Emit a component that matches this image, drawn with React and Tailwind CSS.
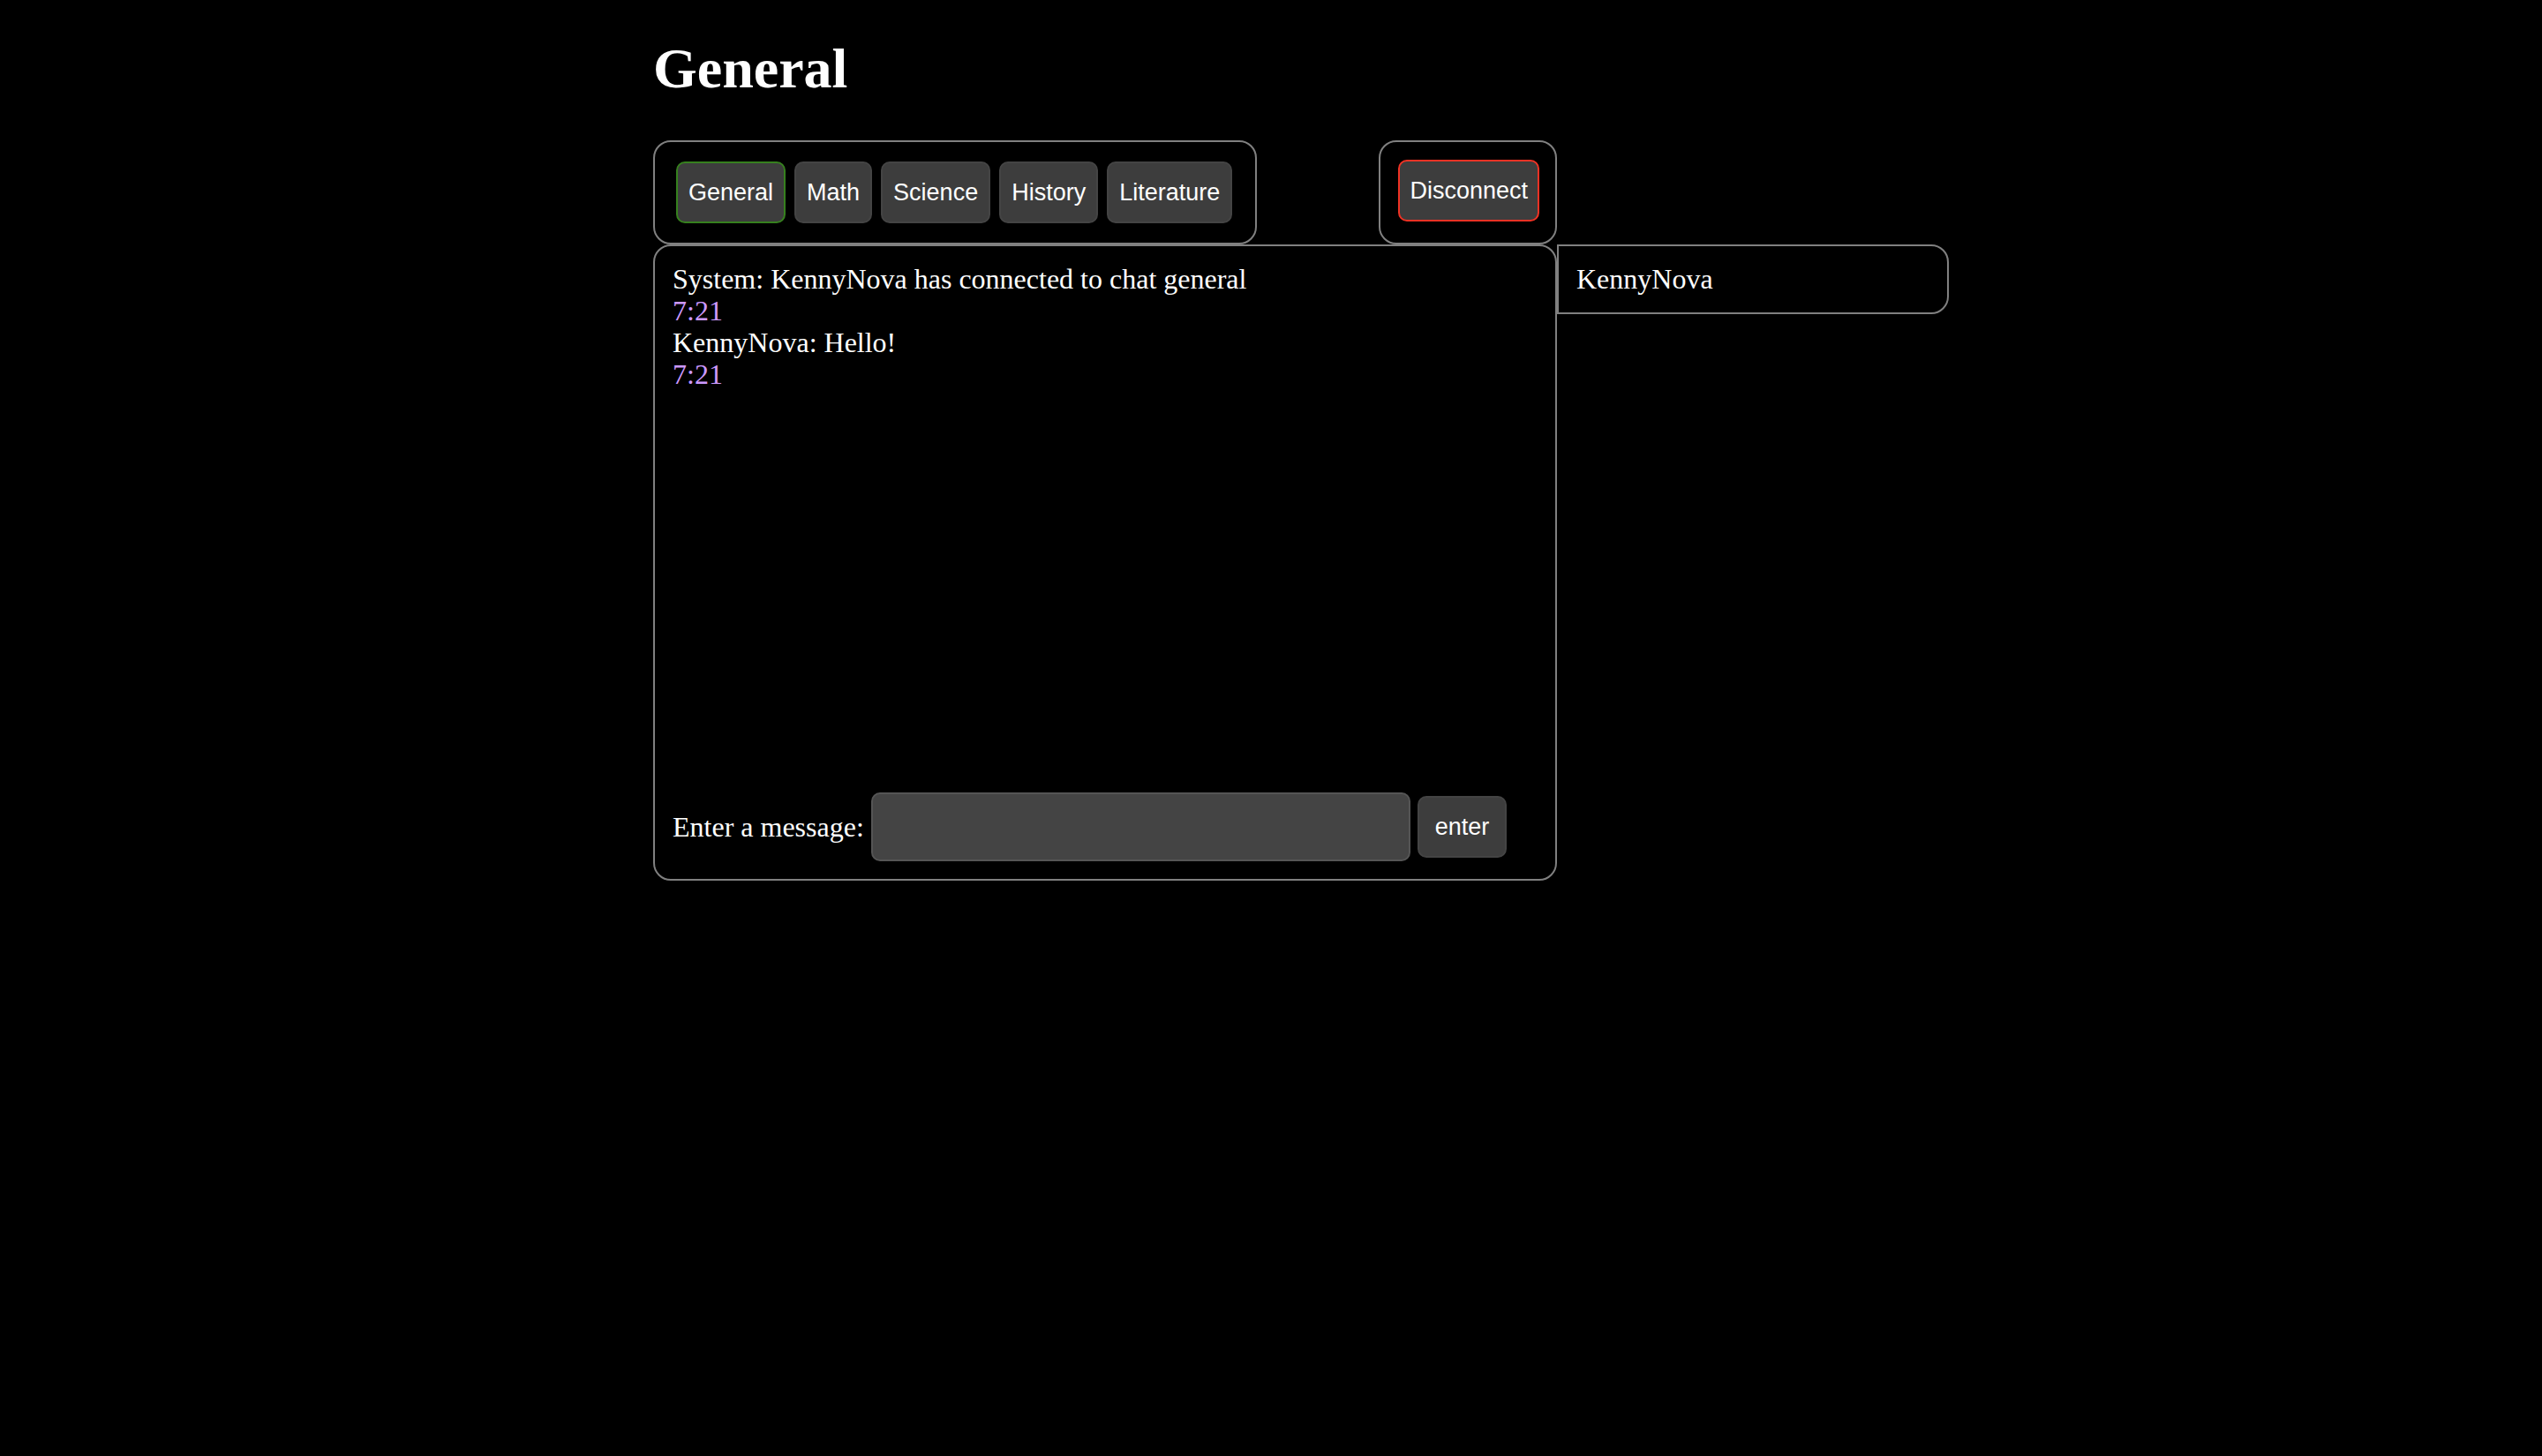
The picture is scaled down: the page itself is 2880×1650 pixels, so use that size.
import { useState } from "react";

const rooms = ["General", "Math", "Science", "History", "Literature"];

const messages = [
  { id: 1, author: "System", text: "KennyNova has connected to chat general", time: "7:21" },
  { id: 2, author: "KennyNova", text: "Hello!", time: "7:21" },
];

const users = ["KennyNova"];

const buttonBase =
  "h-[70px] rounded-[10px] border-2 bg-[#3d3d3d] text-center font-['Liberation_Sans',Arial,sans-serif] text-[27px] leading-8 text-white";

export default function App() {
  const [room, setRoom] = useState("General");
  const [draft, setDraft] = useState("");

  return (
    <div className="flex min-h-screen justify-center bg-black pl-[68px] font-['Liberation_Serif','Times_New_Roman',serif] text-[32px] leading-9 text-white">
      <div className="w-full max-w-[1468px]">
        <h1 className="pt-[42px] pb-[45px] text-[64px] leading-[72px] font-bold">{room}</h1>
        <div className="grid grid-cols-[minmax(0,1024px)_444px] items-start">
          <header className="flex items-stretch justify-between">
            <nav
              aria-label="Rooms"
              className="flex gap-2.5 rounded-[20px] border-2 border-[#808080] py-[22px] pr-[26px] pl-6"
            >
              {rooms.map((name) => (
                <button
                  key={name}
                  type="button"
                  onClick={() => setRoom(name)}
                  className={`${buttonBase} px-3 ${name === room ? "border-[#36801e]" : "border-[#444444]"}`}
                >
                  {name}
                </button>
              ))}
            </nav>
            <div className="rounded-[20px] border-2 border-[#808080] pt-5 pr-[18px] pl-5">
              <button type="button" className={`${buttonBase} border-[#f03224] px-[11px]`}>
                Disconnect
              </button>
            </div>
          </header>
          <main className="col-start-1 rounded-[20px] border-2 border-[#808080] px-5 pt-[19px] pb-5">
            <ul className="min-h-[600px]">
              {messages.map((message) => (
                <li key={message.id}>
                  <p>
                    {message.author}: {message.text}
                  </p>
                  <p className="text-[#cc99ff]">{message.time}</p>
                </li>
              ))}
            </ul>
            <form className="flex items-center gap-2" onSubmit={(event) => event.preventDefault()}>
              <label htmlFor="message">Enter a message:</label>
              <input
                id="message"
                type="text"
                value={draft}
                onChange={(event) => setDraft(event.target.value)}
                className="h-[78px] w-full max-w-[611px] min-w-0 rounded-[10px] border-2 border-[#555555] bg-[#444444] px-3"
              />
              <button type="submit" className={`${buttonBase} border-[#444444] px-[18px]`}>
                enter
              </button>
            </form>
          </main>
          <aside className="rounded-r-[20px] border-2 border-[#808080] px-5 pt-[19px] pb-5">
            <ul>
              {users.map((user) => (
                <li key={user}>{user}</li>
              ))}
            </ul>
          </aside>
        </div>
      </div>
    </div>
  );
}
